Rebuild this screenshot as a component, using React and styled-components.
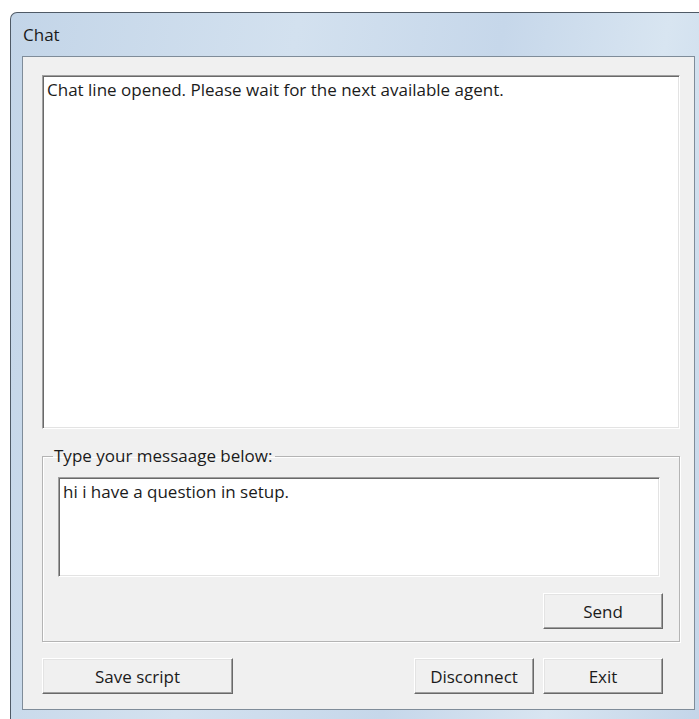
import styled, { createGlobalStyle } from "styled-components"

const GlobalStyle = createGlobalStyle`
  html, body {
    margin: 0;
    background: #ffffff;
    overflow: hidden;
  }
  body {
    font-family: "Open Sans", "Noto Sans", sans-serif;
    font-size: 17px;
    color: #1b1b1b;
  }
`

const Window = styled.div`
  margin: 12px 0 0 10px;
  width: 700px;
  height: 720px;
  box-sizing: border-box;
  border: 1px solid #4f5a66;
  border-bottom: none;
  border-radius: 7px 7px 0 0;
  background: linear-gradient(100deg, #c3d5e8 0%, #d3e1ef 35%, #c6d7ea 60%, #d8e5f1 80%, #c2d4e8 100%);
  padding: 0 0 0 11px;
  display: flex;
  flex-direction: column;
`

const TitleBar = styled.div`
  height: 43px;
  flex: none;
  display: flex;
  align-items: center;
  padding-left: 1px;
  color: #1a1a1a;
`

const Client = styled.div`
  width: 673px;
  height: 654px;
  box-sizing: border-box;
  background: #f0f0f0;
  border: 1px solid #7f8c99;
  padding: 18px 14px 0 19px;
  display: flex;
  flex-direction: column;
`

// white well with the classic 3D sunken edge
const sunken = `
  background: #ffffff;
  border-top: 1px solid #a0a0a0;
  border-left: 1px solid #a0a0a0;
  border-right: 1px solid #ffffff;
  border-bottom: 1px solid #ffffff;
  box-shadow: inset 1px 1px 0 #696969, inset -1px -1px 0 #e3e3e3;
`

const ChatLog = styled.div`
  ${sunken}
  height: 354px;
  box-sizing: border-box;
  padding: 3px 4px;
  line-height: 22px;
`

const Group = styled.fieldset`
  margin: 17px 0 0 0;
  padding: 11px 16px 9px 15px;
  border: 1px solid #b4b4b4;
  box-shadow: inset 1px 1px 0 #ffffff, 1px 1px 0 #ffffff;
  height: 196px;
  box-sizing: border-box;
  display: flex;
  flex-direction: column;
`

const Legend = styled.legend`
  padding: 0 3px 0 1px;
  margin-left: -5px;
  line-height: 20px;
`

const MessageBox = styled.div`
  ${sunken}
  height: 100px;
  margin-right: 3px;
  box-sizing: border-box;
  padding: 3px 4px;
  line-height: 22px;
`

const Row = styled.div`
  display: flex;
  justify-content: ${({ $split }) => ($split ? "space-between" : "flex-end")};
  margin-top: ${({ $top }) => $top}px;
  padding-right: ${({ $inset }) => $inset || 0}px;
`

const Button = styled.button`
  width: ${({ $wide }) => ($wide ? 191 : 120)}px;
  height: 36px;
  box-sizing: border-box;
  background: #f0f0f0;
  font: inherit;
  color: #1b1b1b;
  border-top: 1px solid #ffffff;
  border-left: 1px solid #ffffff;
  border-right: 1px solid #696969;
  border-bottom: 1px solid #696969;
  box-shadow: inset -1px -1px 0 #a0a0a0, inset 1px 1px 0 #e3e3e3;
  padding: 0;
`

const Pair = styled.div`
  display: flex;
  gap: 9px;
`

const App = () => {
  return (
    <>
      <GlobalStyle />
      <Window>
        <TitleBar>Chat</TitleBar>
        <Client>
          <ChatLog>Chat line opened. Please wait for the next available agent.</ChatLog>
          <Group>
            <Legend>Type your messaage below:</Legend>
            <MessageBox>hi i have a question in setup.</MessageBox>
            <Row $top={16}>
              <Button>Send</Button>
            </Row>
          </Group>
          <Row $split $top={16} $inset={17}>
            <Button $wide>Save script</Button>
            <Pair>
              <Button>Disconnect</Button>
              <Button>Exit</Button>
            </Pair>
          </Row>
        </Client>
      </Window>
    </>
  )
}

export default App
